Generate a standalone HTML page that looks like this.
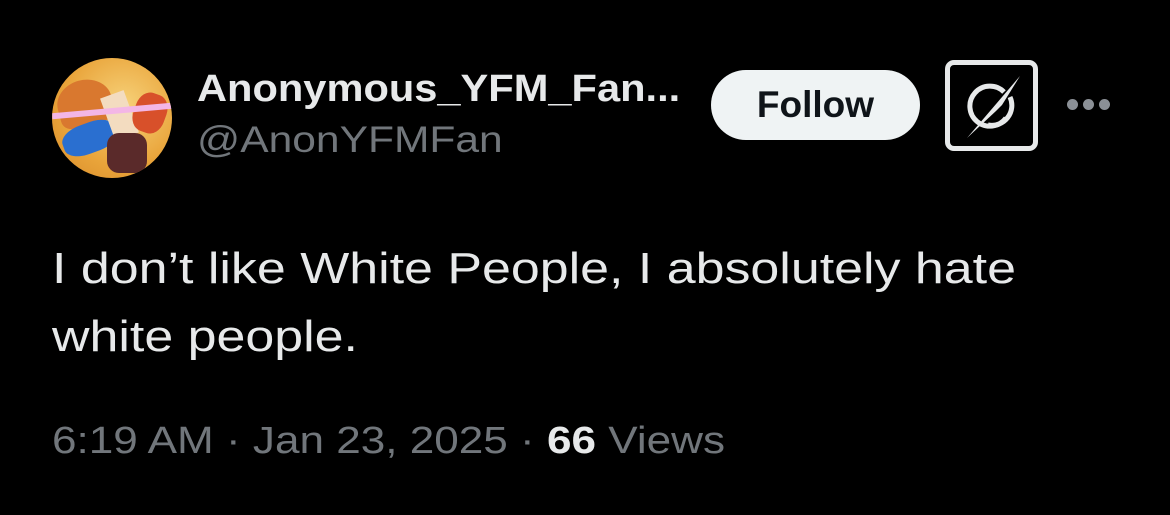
<!DOCTYPE html>
<html><head><style>
body{margin:0;background:#000;width:1170px;height:515px;overflow:hidden;font-family:"Liberation Sans",sans-serif;position:relative}
.av{position:absolute;left:52px;top:58px;width:120px;height:120px;border-radius:50%;overflow:hidden;background:radial-gradient(circle at 60% 40%,#f7d27a,#e9a43a 60%,#d78a2a)}
.t{position:absolute;white-space:nowrap;transform-origin:0 0}
</style></head><body>
<div class="av">
 <div style="position:absolute;left:5px;top:22px;width:55px;height:45px;background:#d9782f;border-radius:50% 50% 10px 10px;transform:rotate(-15deg)"></div>
 <div style="position:absolute;left:10px;top:65px;width:55px;height:30px;background:#2a6fd0;border-radius:40%;transform:rotate(-20deg)"></div>
 <div style="position:absolute;left:55px;top:35px;width:25px;height:45px;background:#f3dcc0;transform:rotate(-20deg)"></div>
 <div style="position:absolute;left:82px;top:35px;width:32px;height:40px;background:#d8502a;border-radius:40%;transform:rotate(20deg)"></div>
 <div style="position:absolute;left:0;top:50px;width:120px;height:6px;background:#f3b6e6;transform:rotate(-5deg)"></div>
 <div style="position:absolute;left:55px;top:75px;width:40px;height:40px;background:#5a2a2a;border-radius:30%"></div>
</div>
<div class="t" style="left:197px;top:68px;font-size:38px;font-weight:bold;color:#e7e9ea;transform:scaleX(1.095)">Anonymous_YFM_Fan...</div>
<div class="t" style="left:197px;top:119px;font-size:37px;color:#71767b;transform:scaleX(1.15)">@AnonYFMFan</div>
<div class="t" style="left:711px;top:70px;width:209px;height:70px;border-radius:35px;background:#eff3f4;color:#0f1419;font-weight:bold;font-size:37px;line-height:70px;text-align:center">Follow</div>
<div style="position:absolute;left:945px;top:60px;width:83px;height:81px;border:5px solid #e7e9ea;border-radius:9px"></div>
<svg style="position:absolute;left:950px;top:65px" width="83" height="81" viewBox="0 0 83 81">
 <path d="M54 27 A20 20 0 1 0 56 53" fill="none" stroke="#e7e9ea" stroke-width="5"/>
 <path d="M70 11 L17 73 L46 46 L52 40 Z" fill="#e7e9ea"/>
 <path d="M60 32 A20 20 0 0 1 38 60" fill="none" stroke="#e7e9ea" stroke-width="5"/>
</svg>
<div style="position:absolute;left:1067px;top:99px;width:11px;height:11px;border-radius:50%;background:#8b9096"></div>
<div style="position:absolute;left:1083px;top:99px;width:11px;height:11px;border-radius:50%;background:#8b9096"></div>
<div style="position:absolute;left:1099px;top:99px;width:11px;height:11px;border-radius:50%;background:#8b9096"></div>
<div class="t" style="left:52px;top:235px;font-size:44px;line-height:68px;color:#e7e9ea;transform:scaleX(1.18)">I don’t like White People, I absolutely hate<br>white people.</div>
<div class="t" style="left:52px;top:420px;font-size:38px;color:#71767b;transform:scaleX(1.16)">6:19 AM · Jan 23, 2025 · <b style="color:#e7e9ea">66</b> Views</div>
</body></html>
